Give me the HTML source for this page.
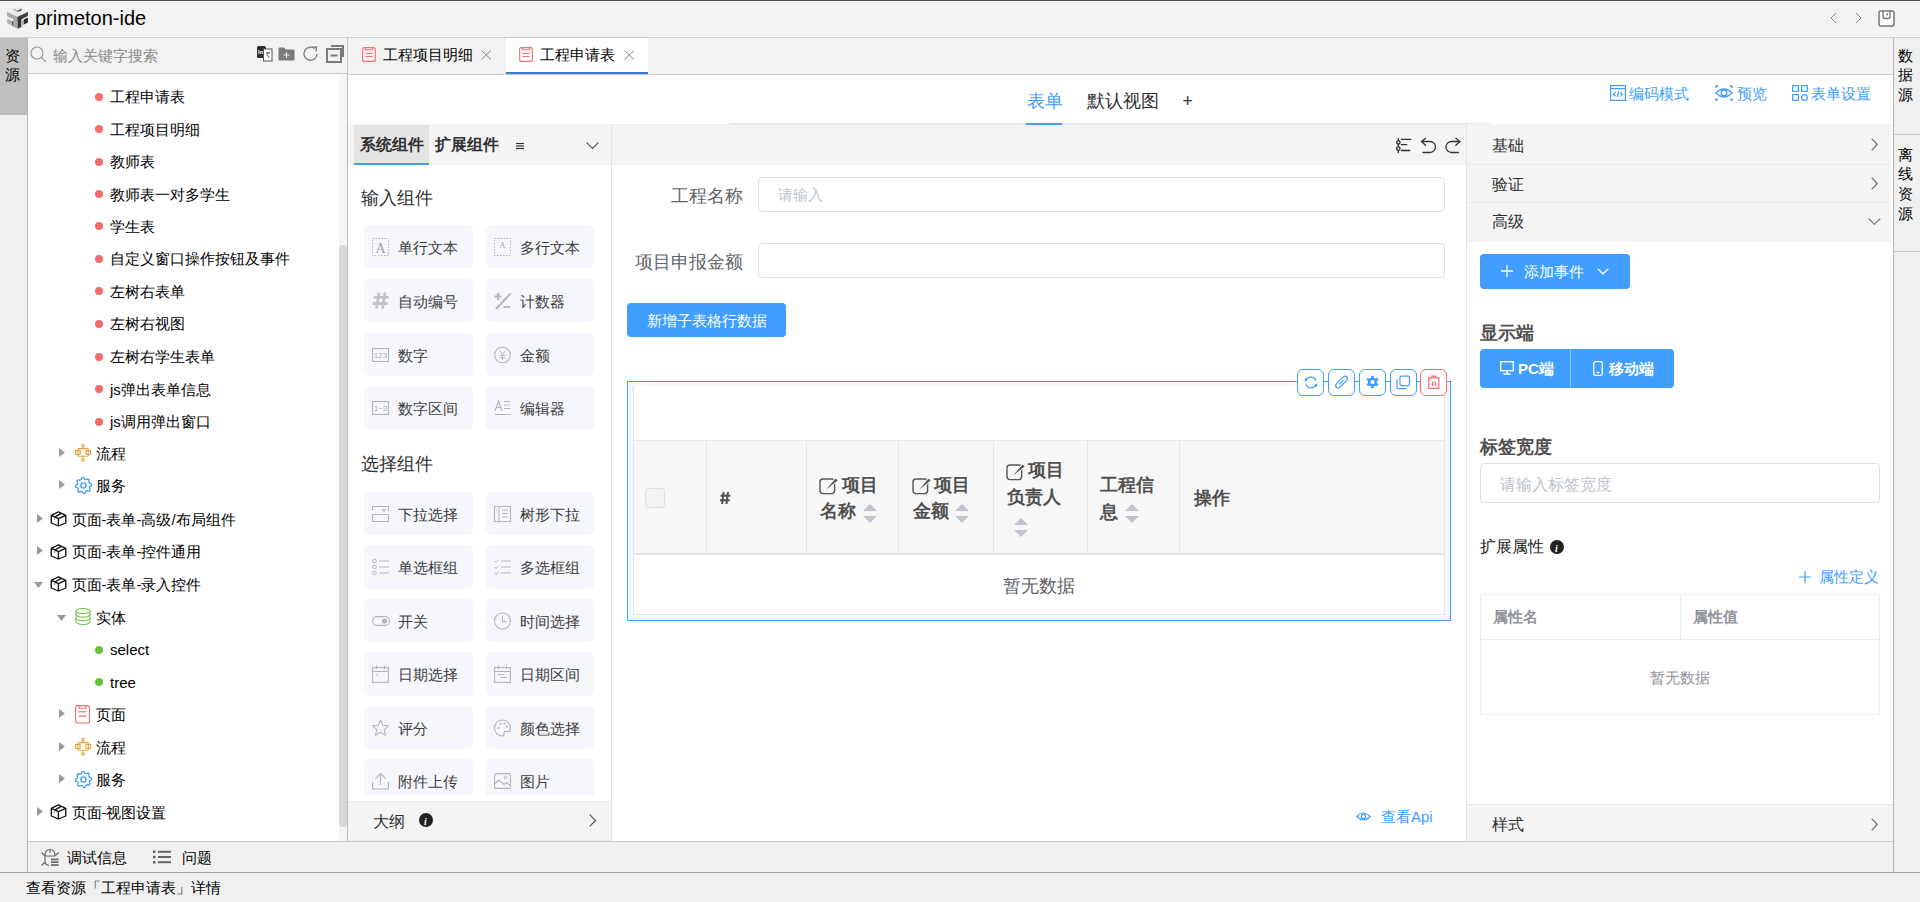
<!DOCTYPE html><html><head><meta charset="utf-8"><style>
html,body{margin:0;padding:0;width:1920px;height:902px;overflow:hidden;background:#f0f0f0;font-family:"Liberation Sans",sans-serif;}
body>div,body>svg{position:absolute;white-space:nowrap;box-sizing:border-box;}
svg{overflow:visible}
</style></head><body>
<div style="left:0px;top:0px;width:1920px;height:37px;background:#f2f2f2"></div>
<div style="left:0px;top:0px;width:1920px;height:1px;background:#4d4d4d"></div>
<div style="left:0px;top:37px;width:1920px;height:1px;background:#cfcfcf"></div>
<svg style="left:0px;top:0px;" width="32" height="32" viewBox="0 0 32 32">
<polygon points="7.1,12.1 17.7,6.8 27.9,11.8 17.7,17" fill="#ececec"/>
<polygon points="13.3,8.4 17.6,10.6 17.6,12.2 13.3,10" fill="#b0b0b0"/>
<polygon points="17.6,10.6 21.6,8.6 21.6,10.2 17.6,12.2" fill="#505050"/>
<polygon points="7.1,12.1 17.7,17 17.7,21.2 7.1,16.3" fill="#a9a9a9"/>
<polygon points="13.3,15 17.7,17 17.7,28.8 13.3,26.8" fill="#a9a9a9"/>
<polygon points="7.1,18.6 12,20.9 12,25.6 7.1,23.3" fill="#b4b4b4"/>
<polygon points="12,20.9 13.3,21.5 13.3,26.2 12,25.6" fill="#5a5a5a"/>
<polygon points="17.7,17 27.9,11.8 27.9,16 17.7,21.2" fill="#404040"/>
<polygon points="17.7,17 21.4,15.1 21.4,27 17.7,28.8" fill="#363636"/>
<polygon points="22.2,20.4 23.9,19.5 23.9,24.6 22.2,25.5" fill="#a8a8a8"/>
<polygon points="23.9,19.5 27.9,17.5 27.9,22.6 23.9,24.6" fill="#252525"/>
</svg>
<div style="left:35px;top:5.50px;font-size:20px;line-height:24px;color:#000;font-weight:400;">primeton-ide</div>
<svg style="left:1829px;top:12px;" width="10" height="12" viewBox="0 0 10 12"><polyline points="7,1 2,6 7,11" fill="none" stroke="#8a8a8a" stroke-width="1"/></svg>
<svg style="left:1854px;top:12px;" width="10" height="12" viewBox="0 0 10 12"><polyline points="2,1 7,6 2,11" fill="none" stroke="#8a8a8a" stroke-width="1"/></svg>
<svg style="left:1878px;top:10px;" width="17" height="17" viewBox="0 0 17 17"><rect x="1" y="1" width="15" height="15" rx="2" fill="#fff" stroke="#777" stroke-width="1.5"/><path d="M5,1 L5,6.5 Q5,8.5 7,8.5 L10,8.5 Q12,8.5 12,6.5 L12,1" fill="none" stroke="#777" stroke-width="1.4"/><line x1="9.2" y1="3" x2="9.2" y2="5.6" stroke="#555" stroke-width="1"/></svg>
<div style="left:0px;top:38px;width:27px;height:834px;background:#f0f0f0"></div>
<div style="left:0px;top:38px;width:27px;height:77px;background:#bfbfbf"></div>
<div style="left:4.5px;top:45.50px;font-size:15px;line-height:20px;color:#000;font-weight:400;">资</div>
<div style="left:4.5px;top:65.20px;font-size:15px;line-height:20px;color:#000;font-weight:400;">源</div>
<div style="left:27px;top:38px;width:1px;height:834px;background:#b4b4b4"></div>
<div style="left:1891px;top:75px;width:2px;height:766px;background:#f0f0f0"></div>
<div style="left:1893px;top:38px;width:27px;height:834px;background:#f0f0f0"></div>
<div style="left:1893px;top:38px;width:1px;height:834px;background:#b4b4b4"></div>
<div style="left:1898px;top:45.50px;font-size:15px;line-height:20px;color:#000;font-weight:400;">数</div>
<div style="left:1898px;top:65.40px;font-size:15px;line-height:20px;color:#000;font-weight:400;">据</div>
<div style="left:1898px;top:85.30px;font-size:15px;line-height:20px;color:#000;font-weight:400;">源</div>
<div style="left:1894px;top:134px;width:26px;height:1px;background:#c8c8c8"></div>
<div style="left:1898px;top:144.50px;font-size:15px;line-height:20px;color:#000;font-weight:400;">离</div>
<div style="left:1898px;top:164.20px;font-size:15px;line-height:20px;color:#000;font-weight:400;">线</div>
<div style="left:1898px;top:183.90px;font-size:15px;line-height:20px;color:#000;font-weight:400;">资</div>
<div style="left:1898px;top:203.60px;font-size:15px;line-height:20px;color:#000;font-weight:400;">源</div>
<div style="left:1894px;top:251px;width:26px;height:1px;background:#c8c8c8"></div>
<div style="left:28px;top:38px;width:319px;height:35px;background:#f2f2f2"></div>
<div style="left:28px;top:73px;width:319px;height:1px;background:#cdcdcd"></div>
<div style="left:347px;top:38px;width:1px;height:804px;background:#bdbdbd"></div>
<svg style="left:30px;top:46px;" width="17" height="17" viewBox="0 0 17 17"><circle cx="7" cy="7" r="6" fill="none" stroke="#999" stroke-width="1.1"/><line x1="11.3" y1="11.3" x2="16" y2="16" stroke="#999" stroke-width="1.2"/></svg>
<div style="left:52.5px;top:45.50px;font-size:15px;line-height:20px;color:#888;font-weight:400;">输入关键字搜索</div>
<svg style="left:257px;top:46px;" width="16" height="16" viewBox="0 0 16 16"><rect x="0" y="0" width="9" height="12" rx="1.5" fill="#2e2e2e"/><text x="1" y="8" font-size="6" font-weight="700" fill="#fff" font-family="Liberation Sans">In</text><rect x="6.5" y="3" width="8.5" height="12" fill="#fff" stroke="#555" stroke-width="1"/><path d="M9,7 L13,7 M11,6 L11,8 M9.5,8 L12.5,12" stroke="#444" stroke-width="0.9" fill="none"/></svg>
<svg style="left:278px;top:47px;" width="17" height="14" viewBox="0 0 17 14"><path d="M0.5,1.5 Q0.5,0.5 1.5,0.5 L6,0.5 L8,2.5 L15.5,2.5 Q16.5,2.5 16.5,3.5 L16.5,12.5 Q16.5,13.5 15.5,13.5 L1.5,13.5 Q0.5,13.5 0.5,12.5 Z" fill="#7b7b7b"/><path d="M8.5,5 L8.5,11 M5.5,8 L11.5,8" stroke="#f0f0f0" stroke-width="1"/></svg>
<svg style="left:303px;top:46px;" width="16" height="16" viewBox="0 0 16 16"><path d="M14,8 A6.5,6.5 0 1 1 11.5,2.6" fill="none" stroke="#7a7a7a" stroke-width="1.3"/><polyline points="8.5,1.2 13.5,1 13,5.5" fill="none" stroke="#7a7a7a" stroke-width="1.3"/></svg>
<svg style="left:326px;top:45px;" width="18" height="18" viewBox="0 0 18 18"><rect x="1" y="4" width="14" height="13" fill="none" stroke="#7a7a7a" stroke-width="2"/><polyline points="5,1 17,1 17,12" fill="none" stroke="#7a7a7a" stroke-width="2"/><line x1="4.5" y1="10.5" x2="11.5" y2="10.5" stroke="#7a7a7a" stroke-width="2"/></svg>
<div style="left:28px;top:74px;width:311px;height:767px;background:#fff"></div>
<div style="left:339px;top:74px;width:8px;height:767px;background:#f4f4f4"></div>
<div style="left:339px;top:245px;width:7.6px;height:582px;background:#d6d6d6;border-radius:4px"></div>
<div style="left:95px;top:92.6px;width:8px;height:8px;background:#f56c6c;border-radius:50%"></div>
<div style="left:110px;top:87.10px;font-size:15px;line-height:20px;color:#000;font-weight:400;">工程申请表</div>
<div style="left:95px;top:125.19999999999999px;width:8px;height:8px;background:#f56c6c;border-radius:50%"></div>
<div style="left:110px;top:119.70px;font-size:15px;line-height:20px;color:#000;font-weight:400;">工程项目明细</div>
<div style="left:95px;top:157.5px;width:8px;height:8px;background:#f56c6c;border-radius:50%"></div>
<div style="left:110px;top:152.00px;font-size:15px;line-height:20px;color:#000;font-weight:400;">教师表</div>
<div style="left:95px;top:190px;width:8px;height:8px;background:#f56c6c;border-radius:50%"></div>
<div style="left:110px;top:184.50px;font-size:15px;line-height:20px;color:#000;font-weight:400;">教师表一对多学生</div>
<div style="left:95px;top:222.3px;width:8px;height:8px;background:#f56c6c;border-radius:50%"></div>
<div style="left:110px;top:216.80px;font-size:15px;line-height:20px;color:#000;font-weight:400;">学生表</div>
<div style="left:95px;top:254.60000000000002px;width:8px;height:8px;background:#f56c6c;border-radius:50%"></div>
<div style="left:110px;top:249.10px;font-size:15px;line-height:20px;color:#000;font-weight:400;">自定义窗口操作按钮及事件</div>
<div style="left:95px;top:287.2px;width:8px;height:8px;background:#f56c6c;border-radius:50%"></div>
<div style="left:110px;top:281.70px;font-size:15px;line-height:20px;color:#000;font-weight:400;">左树右表单</div>
<div style="left:95px;top:319.5px;width:8px;height:8px;background:#f56c6c;border-radius:50%"></div>
<div style="left:110px;top:314.00px;font-size:15px;line-height:20px;color:#000;font-weight:400;">左树右视图</div>
<div style="left:95px;top:352.5px;width:8px;height:8px;background:#f56c6c;border-radius:50%"></div>
<div style="left:110px;top:347.00px;font-size:15px;line-height:20px;color:#000;font-weight:400;">左树右学生表单</div>
<div style="left:95px;top:385px;width:8px;height:8px;background:#f56c6c;border-radius:50%"></div>
<div style="left:110px;top:379.50px;font-size:15px;line-height:20px;color:#000;font-weight:400;">js弹出表单信息</div>
<div style="left:95px;top:417.5px;width:8px;height:8px;background:#f56c6c;border-radius:50%"></div>
<div style="left:110px;top:412.00px;font-size:15px;line-height:20px;color:#000;font-weight:400;">js调用弹出窗口</div>
<svg style="left:59px;top:447.9px;" width="7" height="9" viewBox="0 0 7 9"><polygon points="0,0 6,4.5 0,9" fill="#999"/></svg>
<svg style="left:74.5px;top:444.4px;" width="16" height="18" viewBox="0 0 16 18"><g fill="none" stroke="#e6a23c" stroke-width="1.1"><circle cx="8" cy="1.6" r="1.3"/><line x1="8" y1="2.9" x2="8" y2="4.6"/><rect x="3" y="4.6" width="10.3" height="7.6" rx="0.8"/><rect x="0.6" y="6.5" width="4.6" height="3.9"/><rect x="11" y="6.5" width="4.6" height="3.9"/><line x1="8" y1="12.2" x2="8" y2="14.4"/><circle cx="8" cy="15.8" r="1.3"/></g></svg>
<div style="left:96px;top:443.90px;font-size:15px;line-height:20px;color:#000;font-weight:400;">流程</div>
<svg style="left:59px;top:480.1px;" width="7" height="9" viewBox="0 0 7 9"><polygon points="0,0 6,4.5 0,9" fill="#999"/></svg>
<svg style="left:74.5px;top:477.1px;" width="17" height="17" viewBox="0 0 17 17"><polygon points="6.94,0.65 8.50,0.50 9.73,2.32 10.91,2.68 12.94,1.85 14.16,2.84 13.74,5.00 14.32,6.09 16.35,6.94 16.50,8.50 14.68,9.73 14.32,10.91 15.15,12.94 14.16,14.16 12.00,13.74 10.91,14.32 10.06,16.35 8.50,16.50 7.27,14.68 6.09,14.32 4.06,15.15 2.84,14.16 3.26,12.00 2.68,10.91 0.65,10.06 0.50,8.50 2.32,7.27 2.68,6.09 1.85,4.06 2.84,2.84 5.00,3.26 6.09,2.68" fill="none" stroke="#409eff" stroke-width="1.3" stroke-linejoin="round"/><circle cx="8.5" cy="8.5" r="2.6" fill="none" stroke="#409eff" stroke-width="1.4"/></svg>
<div style="left:96px;top:476.10px;font-size:15px;line-height:20px;color:#000;font-weight:400;">服务</div>
<svg style="left:37px;top:513.8px;" width="7" height="9" viewBox="0 0 7 9"><polygon points="0,0 6,4.5 0,9" fill="#999"/></svg>
<svg style="left:50.0px;top:511.29999999999995px;" width="17" height="16" viewBox="0 0 17 16"><path d="M8.4,0.9 L15.75,4.3 L15.75,12 L8.4,15 L1.3,12 L1.3,4.3 Z M1.3,4.3 L8.4,7.7 L15.75,4.3 M8.4,7.7 L8.4,15 M4.6,6.1 L10.8,2.6" fill="none" stroke="#111" stroke-width="1.35" stroke-linejoin="round"/><path d="M4.6,6.4 L4.6,9" stroke="#888" stroke-width="1"/></svg>
<div style="left:71.5px;top:509.80px;font-size:15px;line-height:20px;color:#000;font-weight:400;">页面-表单-高级/布局组件</div>
<svg style="left:37px;top:546.3px;" width="7" height="9" viewBox="0 0 7 9"><polygon points="0,0 6,4.5 0,9" fill="#999"/></svg>
<svg style="left:50.0px;top:543.8px;" width="17" height="16" viewBox="0 0 17 16"><path d="M8.4,0.9 L15.75,4.3 L15.75,12 L8.4,15 L1.3,12 L1.3,4.3 Z M1.3,4.3 L8.4,7.7 L15.75,4.3 M8.4,7.7 L8.4,15 M4.6,6.1 L10.8,2.6" fill="none" stroke="#111" stroke-width="1.35" stroke-linejoin="round"/><path d="M4.6,6.4 L4.6,9" stroke="#888" stroke-width="1"/></svg>
<div style="left:71.5px;top:542.30px;font-size:15px;line-height:20px;color:#000;font-weight:400;">页面-表单-控件通用</div>
<svg style="left:34.3px;top:581.8px;" width="10" height="6" viewBox="0 0 10 6"><polygon points="0,0 9,0 4.5,6" fill="#999"/></svg>
<svg style="left:50.0px;top:576.4px;" width="17" height="16" viewBox="0 0 17 16"><path d="M8.4,0.9 L15.75,4.3 L15.75,12 L8.4,15 L1.3,12 L1.3,4.3 Z M1.3,4.3 L8.4,7.7 L15.75,4.3 M8.4,7.7 L8.4,15 M4.6,6.1 L10.8,2.6" fill="none" stroke="#111" stroke-width="1.35" stroke-linejoin="round"/><path d="M4.6,6.4 L4.6,9" stroke="#888" stroke-width="1"/></svg>
<div style="left:71.5px;top:574.90px;font-size:15px;line-height:20px;color:#000;font-weight:400;">页面-表单-录入控件</div>
<svg style="left:57.3px;top:614.6px;" width="10" height="6" viewBox="0 0 10 6"><polygon points="0,0 9,0 4.5,6" fill="#999"/></svg>
<svg style="left:74.5px;top:607.7px;" width="16" height="17" viewBox="0 0 16 17"><g fill="none" stroke="#67c23a" stroke-width="1"><ellipse cx="8" cy="3" rx="7" ry="2.5"/><path d="M1,3 L1,14 A7,2.5 0 0 0 15,14 L15,3"/><path d="M1,6.7 A7,2.5 0 0 0 15,6.7"/><path d="M1,10.3 A7,2.5 0 0 0 15,10.3"/></g></svg>
<div style="left:96px;top:607.70px;font-size:15px;line-height:20px;color:#000;font-weight:400;">实体</div>
<div style="left:95px;top:645.8px;width:8px;height:8px;background:#67c23a;border-radius:50%"></div>
<div style="left:110px;top:640.30px;font-size:15px;line-height:20px;color:#000;font-weight:400;">select</div>
<div style="left:95px;top:678.3px;width:8px;height:8px;background:#67c23a;border-radius:50%"></div>
<div style="left:110px;top:672.80px;font-size:15px;line-height:20px;color:#000;font-weight:400;">tree</div>
<svg style="left:59px;top:708.9px;" width="7" height="9" viewBox="0 0 7 9"><polygon points="0,0 6,4.5 0,9" fill="#999"/></svg>
<svg style="left:75.0px;top:704.9px;" width="15" height="19" viewBox="0 0 15 19"><g fill="none" stroke="#f56c6c" stroke-width="1.1"><rect x="0.6" y="0.6" width="13.8" height="17.4" rx="2"/><path d="M4,0.6 L4,3.3 L11,3.3 L11,0.6"/><line x1="3.5" y1="6.8" x2="11.5" y2="6.8"/><line x1="3.5" y1="11.1" x2="11.5" y2="11.1"/></g></svg>
<div style="left:96px;top:704.90px;font-size:15px;line-height:20px;color:#000;font-weight:400;">页面</div>
<svg style="left:59px;top:741.5px;" width="7" height="9" viewBox="0 0 7 9"><polygon points="0,0 6,4.5 0,9" fill="#999"/></svg>
<svg style="left:74.5px;top:738px;" width="16" height="18" viewBox="0 0 16 18"><g fill="none" stroke="#e6a23c" stroke-width="1.1"><circle cx="8" cy="1.6" r="1.3"/><line x1="8" y1="2.9" x2="8" y2="4.6"/><rect x="3" y="4.6" width="10.3" height="7.6" rx="0.8"/><rect x="0.6" y="6.5" width="4.6" height="3.9"/><rect x="11" y="6.5" width="4.6" height="3.9"/><line x1="8" y1="12.2" x2="8" y2="14.4"/><circle cx="8" cy="15.8" r="1.3"/></g></svg>
<div style="left:96px;top:737.50px;font-size:15px;line-height:20px;color:#000;font-weight:400;">流程</div>
<svg style="left:59px;top:773.8px;" width="7" height="9" viewBox="0 0 7 9"><polygon points="0,0 6,4.5 0,9" fill="#999"/></svg>
<svg style="left:74.5px;top:770.8px;" width="17" height="17" viewBox="0 0 17 17"><polygon points="6.94,0.65 8.50,0.50 9.73,2.32 10.91,2.68 12.94,1.85 14.16,2.84 13.74,5.00 14.32,6.09 16.35,6.94 16.50,8.50 14.68,9.73 14.32,10.91 15.15,12.94 14.16,14.16 12.00,13.74 10.91,14.32 10.06,16.35 8.50,16.50 7.27,14.68 6.09,14.32 4.06,15.15 2.84,14.16 3.26,12.00 2.68,10.91 0.65,10.06 0.50,8.50 2.32,7.27 2.68,6.09 1.85,4.06 2.84,2.84 5.00,3.26 6.09,2.68" fill="none" stroke="#409eff" stroke-width="1.3" stroke-linejoin="round"/><circle cx="8.5" cy="8.5" r="2.6" fill="none" stroke="#409eff" stroke-width="1.4"/></svg>
<div style="left:96px;top:769.80px;font-size:15px;line-height:20px;color:#000;font-weight:400;">服务</div>
<svg style="left:37px;top:806.5px;" width="7" height="9" viewBox="0 0 7 9"><polygon points="0,0 6,4.5 0,9" fill="#999"/></svg>
<svg style="left:50.0px;top:804px;" width="17" height="16" viewBox="0 0 17 16"><path d="M8.4,0.9 L15.75,4.3 L15.75,12 L8.4,15 L1.3,12 L1.3,4.3 Z M1.3,4.3 L8.4,7.7 L15.75,4.3 M8.4,7.7 L8.4,15 M4.6,6.1 L10.8,2.6" fill="none" stroke="#111" stroke-width="1.35" stroke-linejoin="round"/><path d="M4.6,6.4 L4.6,9" stroke="#888" stroke-width="1"/></svg>
<div style="left:71.5px;top:802.50px;font-size:15px;line-height:20px;color:#000;font-weight:400;">页面-视图设置</div>
<div style="left:28px;top:841px;width:1865px;height:31px;background:#f0f0f0"></div>
<div style="left:28px;top:841px;width:1865px;height:1px;background:#c8c8c8"></div>
<div style="left:0px;top:872px;width:1920px;height:1px;background:#a0a0a0"></div>
<div style="left:0px;top:873px;width:1920px;height:29px;background:#f0f0f0"></div>
<svg style="left:41px;top:848px;" width="19" height="19" viewBox="0 0 19 19"><g fill="none" stroke="#6a6a6a" stroke-width="1.2"><path d="M4,8 Q4,1.5 9,1.5 Q14,1.5 14,8"/><path d="M9,1.5 L9,5"/><path d="M0.6,4.5 L4,8 M0.6,17.5 L4,14 M4,8 L4,14 Q4.5,17 8,17.5 M14,8 L17.5,4.5 M4,8 L14,8"/></g><g fill="#6a6a6a"><rect x="10" y="10.6" width="7.6" height="1.7"/><rect x="10" y="13.3" width="7.6" height="1.7"/><rect x="10" y="16.2" width="7.6" height="1.7"/></g></svg>
<div style="left:67px;top:848.00px;font-size:15px;line-height:20px;color:#000;font-weight:400;">调试信息</div>
<svg style="left:153px;top:850px;" width="18" height="14" viewBox="0 0 18 14"><g fill="#666"><rect x="0" y="0.5" width="2.5" height="2.5"/><rect x="0" y="5.8" width="2.5" height="2.5"/><rect x="0" y="11" width="2.5" height="2.5"/><rect x="5" y="0.8" width="13" height="2"/><rect x="5" y="6" width="13" height="2"/><rect x="5" y="11.2" width="13" height="2"/></g></svg>
<div style="left:182px;top:848.00px;font-size:15px;line-height:20px;color:#000;font-weight:400;">问题</div>
<div style="left:25.5px;top:878.00px;font-size:15px;line-height:20px;color:#000;font-weight:400;">查看资源「工程申请表」详情</div>
<div style="left:348px;top:38px;width:1545px;height:36px;background:#f2f2f2"></div>
<div style="left:348px;top:74px;width:1545px;height:1px;background:#cfcfcf"></div>
<div style="left:506px;top:38px;width:142px;height:36px;background:#fff"></div>
<div style="left:506px;top:72px;width:142px;height:2px;background:#3b7dd0"></div>
<svg style="left:361.5px;top:47px;" width="14" height="15" viewBox="0 0 14 15"><g fill="none" stroke="#f27474" stroke-width="1.1"><rect x="0.6" y="0.6" width="12.8" height="13.8" rx="2"/><path d="M3.5,0.6 L3.5,2.8 L10.5,2.8 L10.5,0.6"/><line x1="3.5" y1="6.5" x2="10.5" y2="6.5"/><line x1="3.5" y1="9.5" x2="10.5" y2="9.5"/></g></svg>
<div style="left:382.5px;top:45.00px;font-size:15px;line-height:20px;color:#000;font-weight:400;">工程项目明细</div>
<svg style="left:481px;top:49.5px;" width="11" height="10" viewBox="0 0 11 10"><path d="M0.5,0.5 L10,9.5 M10,0.5 L0.5,9.5" stroke="#808080" stroke-width="0.95"/></svg>
<svg style="left:518.5px;top:47px;" width="14" height="15" viewBox="0 0 14 15"><g fill="none" stroke="#f27474" stroke-width="1.1"><rect x="0.6" y="0.6" width="12.8" height="13.8" rx="2"/><path d="M3.5,0.6 L3.5,2.8 L10.5,2.8 L10.5,0.6"/><line x1="3.5" y1="6.5" x2="10.5" y2="6.5"/><line x1="3.5" y1="9.5" x2="10.5" y2="9.5"/></g></svg>
<div style="left:540px;top:45.00px;font-size:15px;line-height:20px;color:#000;font-weight:400;">工程申请表</div>
<svg style="left:623.5px;top:49.5px;" width="11" height="10" viewBox="0 0 11 10"><path d="M0.5,0.5 L10,9.5 M10,0.5 L0.5,9.5" stroke="#808080" stroke-width="0.95"/></svg>
<div style="left:348px;top:75px;width:1545px;height:766px;background:#fff"></div>
<div style="left:348px;top:124px;width:1545px;height:1px;background:#f3eded"></div>
<div style="left:729px;top:123px;width:762px;height:2px;background:#e4e7ed"></div>
<div style="left:1026.5px;top:88.50px;font-size:17.5px;line-height:24px;color:#409eff;font-weight:400;">表单</div>
<div style="left:1026px;top:123px;width:36px;height:2px;background:#409eff"></div>
<div style="left:1086.5px;top:88.50px;font-size:17.5px;line-height:24px;color:#303133;font-weight:400;">默认视图</div>
<div style="left:1182.5px;top:88.50px;font-size:17.5px;line-height:24px;color:#303133;font-weight:400;">+</div>
<svg style="left:1609.5px;top:85px;" width="16" height="16" viewBox="0 0 16 16"><g fill="none" stroke="#409eff" stroke-width="1.2"><rect x="0.6" y="0.6" width="14.8" height="14.8"/><line x1="0.6" y1="3.6" x2="15.4" y2="3.6"/><path d="M5.5,7 L3.5,9.2 L5.5,11.4 M10.5,7 L12.5,9.2 L10.5,11.4 M8.8,6.5 L7.2,12"/></g></svg>
<div style="left:1629px;top:84.00px;font-size:15px;line-height:20px;color:#409eff;font-weight:400;">编码模式</div>
<svg style="left:1714.5px;top:85px;" width="18" height="16" viewBox="0 0 18 16"><g fill="none" stroke="#409eff" stroke-width="1.3"><path d="M1,8 Q9,0 17,8 Q9,16 1,8 Z"/><circle cx="9" cy="8" r="2.8"/><path d="M1,3 L1,1 L3,1 M15,1 L17,1 L17,3 M17,13 L17,15 L15,15 M3,15 L1,15 L1,13"/></g></svg>
<div style="left:1736.5px;top:84.00px;font-size:15px;line-height:20px;color:#409eff;font-weight:400;">预览</div>
<svg style="left:1791.5px;top:85px;" width="16" height="16" viewBox="0 0 16 16"><g fill="none" stroke="#409eff" stroke-width="1.2"><rect x="0.6" y="0.6" width="5.8" height="5.8"/><rect x="9.6" y="0.6" width="5.8" height="5.8"/><rect x="0.6" y="9.6" width="5.8" height="5.8"/><circle cx="12.5" cy="12.5" r="2.9"/></g></svg>
<div style="left:1811px;top:84.00px;font-size:15px;line-height:20px;color:#409eff;font-weight:400;">表单设置</div>
<div style="left:348px;top:124px;width:263px;height:41px;background:#f4f4f4"></div>
<div style="left:354px;top:125px;width:75px;height:38px;background:#e4e4e4"></div>
<div style="left:354px;top:163px;width:75px;height:2px;background:#409eff"></div>
<div style="left:360px;top:134.00px;font-size:16px;line-height:22px;color:#303133;font-weight:700;">系统组件</div>
<div style="left:434.5px;top:134.00px;font-size:16px;line-height:22px;color:#303133;font-weight:700;">扩展组件</div>
<svg style="left:515.5px;top:142px;" width="8" height="8" viewBox="0 0 8 8"><g stroke="#303133" stroke-width="1.2"><line x1="0" y1="1.5" x2="8" y2="1.5"/><line x1="0" y1="4" x2="8" y2="4"/><line x1="0" y1="6.5" x2="8" y2="6.5"/></g></svg>
<svg style="left:586px;top:141.5px;" width="13" height="8" viewBox="0 0 13 8"><polyline points="0.7,0.7 6.5,6.5 12.3,0.7" fill="none" stroke="#555" stroke-width="1.2"/></svg>
<div style="left:611px;top:124px;width:1px;height:717px;background:#e4e4e4"></div>
<div style="left:360.5px;top:186.00px;font-size:17.5px;line-height:24px;color:#303133;font-weight:400;">输入组件</div>
<div style="left:360.5px;top:451.50px;font-size:17.5px;line-height:24px;color:#303133;font-weight:400;">选择组件</div>
<div style="left:364px;top:225.0px;width:109px;height:43.3px;background:#f6f7fc;border-radius:5px"></div>
<svg style="left:372px;top:238.0px;" width="18" height="18" viewBox="0 0 18 18"><g fill="none" stroke="#b4b4b8" stroke-width="1" stroke-dasharray="1.5,1.5"><rect x="0.5" y="0.5" width="16" height="17"/></g><text x="8.5" y="14.5" text-anchor="middle" font-size="14" fill="#a0a0a4" font-family="Liberation Serif">A</text></svg>
<div style="left:398px;top:238.00px;font-size:15px;line-height:20px;color:#3d3d3d;font-weight:400;">单行文本</div>
<div style="left:486px;top:225.0px;width:108px;height:43.3px;background:#f6f7fc;border-radius:5px"></div>
<svg style="left:494px;top:238.0px;" width="18" height="18" viewBox="0 0 18 18"><g fill="none" stroke="#b4b4b8" stroke-width="1" stroke-dasharray="1.5,1.5"><rect x="0.5" y="0.5" width="16" height="17"/></g><text x="5.5" y="9.5" font-size="8" fill="#a0a0a4" font-family="Liberation Serif">A</text></svg>
<div style="left:520px;top:238.00px;font-size:15px;line-height:20px;color:#3d3d3d;font-weight:400;">多行文本</div>
<div style="left:364px;top:278.8px;width:109px;height:43.3px;background:#f6f7fc;border-radius:5px"></div>
<svg style="left:372px;top:291.8px;" width="18" height="18" viewBox="0 0 18 18"><path d="M7,0.5 L4.5,16.5 M13,0.5 L10.5,16.5 M1.5,5.3 L16.5,5.3 M0.5,11.5 L15.5,11.5" stroke="#c4c4c8" stroke-width="2.8" fill="none"/></svg>
<div style="left:398px;top:291.80px;font-size:15px;line-height:20px;color:#3d3d3d;font-weight:400;">自动编号</div>
<div style="left:486px;top:278.8px;width:108px;height:43.3px;background:#f6f7fc;border-radius:5px"></div>
<svg style="left:494px;top:291.8px;" width="18" height="18" viewBox="0 0 18 18"><path d="M0.5,4.5 L7.5,4.5 M4,1 L4,8 M16.5,1.5 L2,17 M9.5,15 L16.5,15" stroke="#b8b8bc" stroke-width="2.2" fill="none"/></svg>
<div style="left:520px;top:291.80px;font-size:15px;line-height:20px;color:#3d3d3d;font-weight:400;">计数器</div>
<div style="left:364px;top:332.6px;width:109px;height:43.3px;background:#f6f7fc;border-radius:5px"></div>
<svg style="left:372px;top:345.6px;" width="18" height="18" viewBox="0 0 18 18"><rect x="0.5" y="2.5" width="16" height="13" fill="none" stroke="#b4b4b8" stroke-width="1.1"/><text x="8.5" y="12" text-anchor="middle" font-size="8" fill="#a8a8ac" font-family="Liberation Sans">123</text></svg>
<div style="left:398px;top:345.60px;font-size:15px;line-height:20px;color:#3d3d3d;font-weight:400;">数字</div>
<div style="left:486px;top:332.6px;width:108px;height:43.3px;background:#f6f7fc;border-radius:5px"></div>
<svg style="left:494px;top:345.6px;" width="18" height="18" viewBox="0 0 18 18"><circle cx="8.5" cy="9" r="7.8" fill="none" stroke="#b4b4b8" stroke-width="1.1"/><path d="M5.5,4.5 L8.5,8.5 L11.5,4.5 M8.5,8.5 L8.5,14 M5.8,9.5 L11.2,9.5 M5.8,11.8 L11.2,11.8" stroke="#b4b4b8" stroke-width="1" fill="none"/></svg>
<div style="left:520px;top:345.60px;font-size:15px;line-height:20px;color:#3d3d3d;font-weight:400;">金额</div>
<div style="left:364px;top:386.4px;width:109px;height:43.3px;background:#f6f7fc;border-radius:5px"></div>
<svg style="left:372px;top:399.4px;" width="18" height="18" viewBox="0 0 18 18"><rect x="0.5" y="2.5" width="16" height="13" fill="none" stroke="#b4b4b8" stroke-width="1.1"/><text x="8.5" y="12" text-anchor="middle" font-size="8" fill="#a8a8ac" font-family="Liberation Sans">1~3</text></svg>
<div style="left:398px;top:399.40px;font-size:15px;line-height:20px;color:#3d3d3d;font-weight:400;">数字区间</div>
<div style="left:486px;top:386.4px;width:108px;height:43.3px;background:#f6f7fc;border-radius:5px"></div>
<svg style="left:494px;top:399.4px;" width="18" height="18" viewBox="0 0 18 18"><path d="M1,12 L4.5,2 L8,12 M2.2,8.5 L6.8,8.5 M10,2.5 L16.5,2.5 M10,6 L16.5,6 M10,9.5 L16.5,9.5 M1,15.5 L16.5,15.5" stroke="#b4b4b8" stroke-width="1.1" fill="none"/></svg>
<div style="left:520px;top:399.40px;font-size:15px;line-height:20px;color:#3d3d3d;font-weight:400;">编辑器</div>
<div style="left:364px;top:491.8px;width:109px;height:43.3px;background:#f6f7fc;border-radius:5px"></div>
<svg style="left:372px;top:504.8px;" width="18" height="18" viewBox="0 0 18 18"><path d="M0.5,6 L0.5,1.5 L16.5,1.5 L16.5,6 M0.5,9.5 L0.5,16.5 L16.5,16.5 L16.5,9.5 M0.5,9.5 L16.5,9.5 M10,4 L12,6 L14,4" stroke="#b4b4b8" stroke-width="1.1" fill="none"/></svg>
<div style="left:398px;top:504.80px;font-size:15px;line-height:20px;color:#3d3d3d;font-weight:400;">下拉选择</div>
<div style="left:486px;top:491.8px;width:108px;height:43.3px;background:#f6f7fc;border-radius:5px"></div>
<svg style="left:494px;top:504.8px;" width="18" height="18" viewBox="0 0 18 18"><rect x="0.5" y="1.5" width="16" height="15" fill="none" stroke="#b4b4b8" stroke-width="1.1"/><path d="M5,1.5 L5,16.5 M8,5 L14,5 M8,8.5 L14,8.5 M8,12 L14,12 M2.5,4.5 L2.5,5.5" stroke="#b4b4b8" stroke-width="1.1" fill="none"/></svg>
<div style="left:520px;top:504.80px;font-size:15px;line-height:20px;color:#3d3d3d;font-weight:400;">树形下拉</div>
<div style="left:364px;top:545.3px;width:109px;height:43.3px;background:#f6f7fc;border-radius:5px"></div>
<svg style="left:372px;top:558.3px;" width="18" height="18" viewBox="0 0 18 18"><g fill="none" stroke="#b4b4b8" stroke-width="1"><circle cx="2.5" cy="3" r="1.8"/><circle cx="2.5" cy="9" r="1.8"/><circle cx="2.5" cy="15" r="1.8"/><path d="M7,3 L17,3 M7,9 L17,9 M7,15 L17,15" stroke-width="1.2"/></g></svg>
<div style="left:398px;top:558.30px;font-size:15px;line-height:20px;color:#3d3d3d;font-weight:400;">单选框组</div>
<div style="left:486px;top:545.3px;width:108px;height:43.3px;background:#f6f7fc;border-radius:5px"></div>
<svg style="left:494px;top:558.3px;" width="18" height="18" viewBox="0 0 18 18"><g fill="none" stroke="#b4b4b8" stroke-width="1"><path d="M0.5,3 L2,4.5 L4.5,1.5 M0.5,9 L2,10.5 L4.5,7.5 M0.5,15 L2,16.5 L4.5,13.5"/><path d="M7,3 L17,3 M7,9 L17,9 M7,15 L17,15" stroke-width="1.2"/></g></svg>
<div style="left:520px;top:558.30px;font-size:15px;line-height:20px;color:#3d3d3d;font-weight:400;">多选框组</div>
<div style="left:364px;top:598.8px;width:109px;height:43.3px;background:#f6f7fc;border-radius:5px"></div>
<svg style="left:372px;top:611.8px;" width="18" height="18" viewBox="0 0 18 18"><rect x="0.6" y="4.6" width="16.8" height="8.8" rx="4.4" fill="none" stroke="#b4b4b8" stroke-width="1.1"/><circle cx="12.5" cy="9" r="2.6" fill="#b4b4b8"/></svg>
<div style="left:398px;top:611.80px;font-size:15px;line-height:20px;color:#3d3d3d;font-weight:400;">开关</div>
<div style="left:486px;top:598.8px;width:108px;height:43.3px;background:#f6f7fc;border-radius:5px"></div>
<svg style="left:494px;top:611.8px;" width="18" height="18" viewBox="0 0 18 18"><circle cx="8.5" cy="9" r="8" fill="none" stroke="#b4b4b8" stroke-width="1.1"/><path d="M8.5,3.5 L8.5,9.5 L12.5,9.5" stroke="#b4b4b8" stroke-width="1.1" fill="none"/></svg>
<div style="left:520px;top:611.80px;font-size:15px;line-height:20px;color:#3d3d3d;font-weight:400;">时间选择</div>
<div style="left:364px;top:652.3px;width:109px;height:43.3px;background:#f6f7fc;border-radius:5px"></div>
<svg style="left:372px;top:665.3px;" width="18" height="18" viewBox="0 0 18 18"><rect x="0.6" y="2.6" width="15.8" height="14.8" fill="none" stroke="#b4b4b8" stroke-width="1.1"/><path d="M0.6,6.5 L16.4,6.5 M4.5,0.5 L4.5,4 M12.5,0.5 L12.5,4 M4,10 L6,10" stroke="#b4b4b8" stroke-width="1.1" fill="none"/></svg>
<div style="left:398px;top:665.30px;font-size:15px;line-height:20px;color:#3d3d3d;font-weight:400;">日期选择</div>
<div style="left:486px;top:652.3px;width:108px;height:43.3px;background:#f6f7fc;border-radius:5px"></div>
<svg style="left:494px;top:665.3px;" width="18" height="18" viewBox="0 0 18 18"><rect x="0.6" y="2.6" width="15.8" height="14.8" fill="none" stroke="#b4b4b8" stroke-width="1.1"/><path d="M0.6,6.5 L16.4,6.5 M4.5,0.5 L4.5,4 M12.5,0.5 L12.5,4 M4,9.5 L10,9.5 M6,12.5 L13,12.5" stroke="#b4b4b8" stroke-width="1.1" fill="none"/></svg>
<div style="left:520px;top:665.30px;font-size:15px;line-height:20px;color:#3d3d3d;font-weight:400;">日期区间</div>
<div style="left:364px;top:705.8px;width:109px;height:43.3px;background:#f6f7fc;border-radius:5px"></div>
<svg style="left:372px;top:718.8px;" width="18" height="18" viewBox="0 0 18 18"><polygon points="8.5,1 10.8,6.3 16.5,6.8 12.2,10.6 13.5,16.2 8.5,13.2 3.5,16.2 4.8,10.6 0.5,6.8 6.2,6.3" fill="none" stroke="#b4b4b8" stroke-width="1.1" stroke-linejoin="round"/></svg>
<div style="left:398px;top:718.80px;font-size:15px;line-height:20px;color:#3d3d3d;font-weight:400;">评分</div>
<div style="left:486px;top:705.8px;width:108px;height:43.3px;background:#f6f7fc;border-radius:5px"></div>
<svg style="left:494px;top:718.8px;" width="18" height="18" viewBox="0 0 18 18"><path d="M8.5,1 A8,8 0 1 0 8.5,17 Q10,17 10,15.5 Q9.5,13 11,12.5 L13.5,12.5 Q16.5,12.5 16.5,9 A8,8 0 0 0 8.5,1 Z" fill="none" stroke="#b4b4b8" stroke-width="1.1"/><circle cx="4.5" cy="9" r="1.1" fill="#b4b4b8"/><circle cx="6.5" cy="5" r="1.1" fill="#b4b4b8"/><circle cx="10.5" cy="4.5" r="1.1" fill="#b4b4b8"/><circle cx="13" cy="7.5" r="1.1" fill="#b4b4b8"/></svg>
<div style="left:520px;top:718.80px;font-size:15px;line-height:20px;color:#3d3d3d;font-weight:400;">颜色选择</div>
<div style="left:364px;top:759.3px;width:109px;height:43.3px;background:#f6f7fc;border-radius:5px"></div>
<svg style="left:372px;top:772.3px;" width="18" height="18" viewBox="0 0 18 18"><path d="M0.6,10 L0.6,17 L16.4,17 L16.4,10 M8.5,13 L8.5,1.5 M3.5,6.5 L8.5,1.5 L13.5,6.5" stroke="#b4b4b8" stroke-width="1.2" fill="none"/></svg>
<div style="left:398px;top:772.30px;font-size:15px;line-height:20px;color:#3d3d3d;font-weight:400;">附件上传</div>
<div style="left:486px;top:759.3px;width:108px;height:43.3px;background:#f6f7fc;border-radius:5px"></div>
<svg style="left:494px;top:772.3px;" width="18" height="18" viewBox="0 0 18 18"><rect x="0.6" y="1.6" width="15.8" height="14.8" rx="2" fill="none" stroke="#b4b4b8" stroke-width="1.1"/><path d="M0.6,12 L5,8 L10,12.5 L12.5,10.5 L16.4,13.5" stroke="#b4b4b8" stroke-width="1.1" fill="none"/><circle cx="11.5" cy="5.5" r="1.3" fill="none" stroke="#b4b4b8" stroke-width="1"/></svg>
<div style="left:520px;top:772.30px;font-size:15px;line-height:20px;color:#3d3d3d;font-weight:400;">图片</div>
<div style="left:348px;top:795px;width:263px;height:6px;background:#fff"></div>
<div style="left:348px;top:800.5px;width:263px;height:40.5px;background:#f4f4f4"></div>
<div style="left:348px;top:800.5px;width:263px;height:1px;background:#ebebeb"></div>
<div style="left:348px;top:840px;width:263px;height:1px;background:#e8eaf2"></div>
<div style="left:373px;top:811.00px;font-size:16px;line-height:22px;color:#303133;font-weight:500;">大纲</div>
<svg style="left:419px;top:813px;" width="14" height="14" viewBox="0 0 14 14"><circle cx="7" cy="7" r="7" fill="#222"/><text x="5" y="11.5" font-size="10" font-style="italic" font-weight="700" fill="#fff" font-family="Liberation Serif">i</text></svg>
<svg style="left:589px;top:814px;" width="8" height="13" viewBox="0 0 8 13"><polyline points="0.7,0.7 6.5,6.5 0.7,12.3" fill="none" stroke="#555" stroke-width="1.2"/></svg>
<div style="left:612px;top:125px;width:854px;height:40px;background:#f4f4f4"></div>
<div style="left:1466px;top:124px;width:1px;height:717px;background:#e4e4e4"></div>
<svg style="left:1396px;top:138px;" width="16" height="16" viewBox="0 0 16 16"><g fill="none" stroke="#303133" stroke-width="1.3" stroke-linecap="round"><path d="M2.3,0.4 L2.3,14.6 M5.3,1.3 L14.8,1.3 M5.3,6.6 L10.8,6.6 M5.3,12.5 L13.8,12.5"/><circle cx="2.3" cy="4.4" r="1.7" fill="#f4f4f4"/><circle cx="2.3" cy="10.6" r="1.7" fill="#f4f4f4"/></g></svg>
<svg style="left:1420.5px;top:138px;" width="16" height="16" viewBox="0 0 16 16"><g fill="none" stroke="#303133" stroke-width="1.3" stroke-linecap="round"><path d="M4.5,0.3 L0.6,3.5 L4.5,7.2"/><path d="M0.6,3.5 L9,3.5 A5.5,5.5 0 0 1 9,14.5 L2.1,14.5"/></g></svg>
<svg style="left:1445px;top:138px;" width="16" height="16" viewBox="0 0 16 16"><g fill="none" stroke="#303133" stroke-width="1.3" stroke-linecap="round"><path d="M10.9,0.3 L14.8,3.5 L10.9,7.2"/><path d="M14.8,3.5 L6.5,3.5 A5.5,5.5 0 0 0 6.5,14.5 L13.4,14.5"/></g></svg>
<div style="right:1177.5px;top:184.00px;font-size:17.5px;line-height:24px;color:#606266;font-weight:400;">工程名称</div>
<div style="left:758px;top:177px;width:687px;height:35px;border:1px solid #dcdfe6;border-radius:4px;background:#fff"></div>
<div style="left:777.5px;top:185.00px;font-size:15px;line-height:20px;color:#c0c4cc;font-weight:400;">请输入</div>
<div style="right:1177.5px;top:249.50px;font-size:17.5px;line-height:24px;color:#606266;font-weight:400;">项目申报金额</div>
<div style="left:758px;top:243px;width:687px;height:35px;border:1px solid #dcdfe6;border-radius:4px;background:#fff"></div>
<div style="left:627px;top:303px;width:159px;height:34px;background:#409eff;border-radius:4px"></div>
<div style="left:406.5px;width:600px;text-align:center;top:310.50px;font-size:15px;line-height:20px;color:#fff;font-weight:400;">新增子表格行数据</div>
<div style="left:627px;top:381px;width:824px;height:240px;border:1.3px solid #409eff;background:#f5f7fd"></div>
<div style="left:633px;top:386px;width:812px;height:229px;border:1px solid #e6e6e6;border-top:none;background:#fff"></div>
<div style="left:634px;top:440px;width:810px;height:115px;background:#f7f7f7;border-top:1px solid #e8e8e8;border-bottom:2px solid #e6e6e6"></div>
<div style="left:706px;top:441px;width:1px;height:113px;background:#e6e6e6"></div>
<div style="left:806px;top:441px;width:1px;height:113px;background:#e6e6e6"></div>
<div style="left:898px;top:441px;width:1px;height:113px;background:#e6e6e6"></div>
<div style="left:993px;top:441px;width:1px;height:113px;background:#e6e6e6"></div>
<div style="left:1087px;top:441px;width:1px;height:113px;background:#e6e6e6"></div>
<div style="left:1179px;top:441px;width:1px;height:113px;background:#e6e6e6"></div>
<div style="left:645px;top:488px;width:20px;height:20px;border:1.6px solid #dadfe8;border-radius:3px;background:#f2f2f2"></div>
<svg style="left:720px;top:492px;" width="11" height="12" viewBox="0 0 11 12"><g stroke="#505050" stroke-width="2"><path d="M3.6,0 L2.1,12 M8,0 L6.5,12"/><path d="M0.6,3.8 L10.4,3.8 M0,8.3 L9.8,8.3"/></g></svg>
<svg style="left:819.1px;top:478px;" width="21" height="17" viewBox="0 0 21 17"><rect x="1" y="1" width="14.6" height="14.6" rx="3" fill="none" stroke="#555" stroke-width="1.4"/><path d="M8.5,10.2 L17.8,1" stroke="#f7f7f7" stroke-width="4.2"/><polygon points="7.2,11.4 16.6,0.4 18.7,2.5" fill="#555"/></svg>
<div style="left:841.5px;top:472.70px;font-size:17.5px;line-height:24px;color:#505050;font-weight:700;">项目</div>
<div style="left:820px;top:499.40px;font-size:17.5px;line-height:24px;color:#505050;font-weight:700;">名称</div>
<svg style="left:863px;top:503.9px;" width="14" height="19" viewBox="0 0 14 19"><polygon points="7,0 14,7 0,7" fill="#c0c4cc"/><polygon points="0,12 14,12 7,19" fill="#c0c4cc"/></svg>
<svg style="left:912px;top:478px;" width="21" height="17" viewBox="0 0 21 17"><rect x="1" y="1" width="14.6" height="14.6" rx="3" fill="none" stroke="#555" stroke-width="1.4"/><path d="M8.5,10.2 L17.8,1" stroke="#f7f7f7" stroke-width="4.2"/><polygon points="7.2,11.4 16.6,0.4 18.7,2.5" fill="#555"/></svg>
<div style="left:934px;top:472.70px;font-size:17.5px;line-height:24px;color:#505050;font-weight:700;">项目</div>
<div style="left:913px;top:499.40px;font-size:17.5px;line-height:24px;color:#505050;font-weight:700;">金额</div>
<svg style="left:955px;top:503.9px;" width="14" height="19" viewBox="0 0 14 19"><polygon points="7,0 14,7 0,7" fill="#c0c4cc"/><polygon points="0,12 14,12 7,19" fill="#c0c4cc"/></svg>
<svg style="left:1006.1px;top:464.3px;" width="21" height="17" viewBox="0 0 21 17"><rect x="1" y="1" width="14.6" height="14.6" rx="3" fill="none" stroke="#555" stroke-width="1.4"/><path d="M8.5,10.2 L17.8,1" stroke="#f7f7f7" stroke-width="4.2"/><polygon points="7.2,11.4 16.6,0.4 18.7,2.5" fill="#555"/></svg>
<div style="left:1028px;top:458.20px;font-size:17.5px;line-height:24px;color:#505050;font-weight:700;">项目</div>
<div style="left:1006.5px;top:485.40px;font-size:17.5px;line-height:24px;color:#505050;font-weight:700;">负责人</div>
<svg style="left:1014px;top:517.9px;" width="14" height="19" viewBox="0 0 14 19"><polygon points="7,0 14,7 0,7" fill="#c0c4cc"/><polygon points="0,12 14,12 7,19" fill="#c0c4cc"/></svg>
<div style="left:1100px;top:473.00px;font-size:17.5px;line-height:24px;color:#505050;font-weight:700;">工程信</div>
<div style="left:1100px;top:499.50px;font-size:17.5px;line-height:24px;color:#505050;font-weight:700;">息</div>
<svg style="left:1125px;top:504.2px;" width="14" height="19" viewBox="0 0 14 19"><polygon points="7,0 14,7 0,7" fill="#c0c4cc"/><polygon points="0,12 14,12 7,19" fill="#c0c4cc"/></svg>
<div style="left:1193.5px;top:486.00px;font-size:17.5px;line-height:24px;color:#505050;font-weight:700;">操作</div>
<div style="left:739px;width:600px;text-align:center;top:574.30px;font-size:17.5px;line-height:24px;color:#606266;font-weight:400;">暂无数据</div>
<div style="left:1297px;top:369px;width:27px;height:27px;border:1px solid #409eff;border-radius:6px;background:#fff"></div>
<svg style="left:1297px;top:369px;" width="26" height="26" viewBox="0 0 26 26"><g fill="none" stroke="#409eff" stroke-width="1.2"><path d="M9,11.5 A5.3,5.3 0 0 1 19,11.8"/><path d="M19,15.5 A5.3,5.3 0 0 1 9,15.2"/></g><polygon points="8.2,8.6 10.8,11.2 7.6,12.6" fill="#409eff"/><polygon points="19.8,18.4 17.2,15.8 20.4,14.4" fill="#409eff"/></svg>
<div style="left:1328px;top:369px;width:27px;height:27px;border:1px solid #409eff;border-radius:6px;background:#fff"></div>
<svg style="left:1328px;top:369px;" width="26" height="26" viewBox="0 0 26 26"><g fill="none" stroke="#409eff" stroke-width="1.2"><path d="M10.2,19 Q7.6,19 7.6,16.6 Q7.6,15.6 8.6,14.6 L15,8.2 Q16,7.2 17,7.2 Q19.4,7.2 19.4,9.6 Q19.4,10.6 18.4,11.6 L12,18 Q11.2,19 10.2,19 Z"/><path d="M11.4,15.4 L15.6,11.2"/></g></svg>
<div style="left:1359px;top:369px;width:27px;height:27px;border:1px solid #409eff;border-radius:6px;background:#fff"></div>
<svg style="left:1359px;top:369px;" width="26" height="26" viewBox="0 0 26 26"><g fill="#409eff"><circle cx="13.5" cy="13" r="4.6"/><g stroke="#409eff" stroke-width="2.6"><line x1="13.5" y1="6.8" x2="13.5" y2="19.2"/><line x1="8.1" y1="9.9" x2="18.9" y2="16.1"/><line x1="8.1" y1="16.1" x2="18.9" y2="9.9"/></g></g><circle cx="13.5" cy="13" r="2.1" fill="#fff"/></svg>
<div style="left:1390px;top:369px;width:27px;height:27px;border:1px solid #409eff;border-radius:6px;background:#fff"></div>
<svg style="left:1390px;top:369px;" width="26" height="26" viewBox="0 0 26 26"><g fill="none" stroke="#409eff" stroke-width="1.2"><rect x="10" y="7.2" width="9.5" height="9.4" rx="1.5"/><path d="M7,10.2 L7,18.4 Q7,19.6 8.2,19.6 L16.4,19.6"/></g></svg>
<div style="left:1420px;top:369px;width:27px;height:27px;border:1px solid #f56c6c;border-radius:6px;background:#fff"></div>
<svg style="left:1420px;top:369px;" width="26" height="26" viewBox="0 0 26 26"><g fill="none" stroke="#f56c6c" stroke-width="1.2"><path d="M7.5,8.9 L19.5,8.9 M11.8,8.9 L11.8,7.2 L15.7,7.2 L15.7,8.9"/><path d="M8.8,8.9 L8.8,19.4 L18.7,19.4 L18.7,8.9"/><path d="M12.5,12.6 L12.5,17 M15.2,12.6 L15.2,17"/></g></svg>
<svg style="left:1355.5px;top:811px;" width="15" height="11" viewBox="0 0 15 11"><g fill="none" stroke="#409eff" stroke-width="1.2"><path d="M0.8,5.5 Q7.5,-1.5 14.2,5.5 Q7.5,12.5 0.8,5.5 Z"/><circle cx="7.5" cy="5.5" r="2.2"/></g></svg>
<div style="left:1381px;top:807.00px;font-size:15px;line-height:20px;color:#409eff;font-weight:400;">查看Api</div>
<div style="left:1467px;top:124px;width:424px;height:40.5px;background:#f4f4f4;border-bottom:1px solid #e8eaf0"></div>
<div style="left:1492px;top:134.70px;font-size:16px;line-height:22px;color:#303133;font-weight:400;">基础</div>
<div style="left:1467px;top:164.5px;width:424px;height:38px;background:#f4f4f4;border-bottom:1px solid #e8eaf0"></div>
<div style="left:1492px;top:173.50px;font-size:16px;line-height:22px;color:#303133;font-weight:400;">验证</div>
<div style="left:1467px;top:202.5px;width:424px;height:39.5px;background:#f4f4f4;"></div>
<div style="left:1492px;top:211.10px;font-size:16px;line-height:22px;color:#303133;font-weight:400;">高级</div>
<svg style="left:1871px;top:138px;" width="7" height="13" viewBox="0 0 7 13"><polyline points="0.7,0.7 6.3,6.5 0.7,12.3" fill="none" stroke="#606266" stroke-width="1.1"/></svg>
<svg style="left:1871px;top:177px;" width="7" height="13" viewBox="0 0 7 13"><polyline points="0.7,0.7 6.3,6.5 0.7,12.3" fill="none" stroke="#606266" stroke-width="1.1"/></svg>
<svg style="left:1868px;top:218px;" width="13" height="7" viewBox="0 0 13 7"><polyline points="0.7,0.7 6.5,6.3 12.3,0.7" fill="none" stroke="#606266" stroke-width="1.1"/></svg>
<div style="left:1480px;top:254px;width:150px;height:35px;background:#409eff;border-radius:4px"></div>
<svg style="left:1501px;top:265px;" width="12" height="12" viewBox="0 0 12 12"><path d="M6,0 L6,12 M0,6 L12,6" stroke="#fff" stroke-width="1.3"/></svg>
<div style="left:1524px;top:262.00px;font-size:15px;line-height:20px;color:#fff;font-weight:400;">添加事件</div>
<svg style="left:1597px;top:268px;" width="12" height="7" viewBox="0 0 12 7"><polyline points="0.7,0.7 6,5.8 11.3,0.7" fill="none" stroke="#fff" stroke-width="1.3"/></svg>
<div style="left:1480px;top:320.50px;font-size:17.5px;line-height:24px;color:#505050;font-weight:700;">显示端</div>
<div style="left:1480px;top:349px;width:194px;height:39px;background:#409eff;border-radius:4px"></div>
<div style="left:1570px;top:349px;width:1px;height:39px;background:#8cc5ff"></div>
<svg style="left:1500px;top:361px;" width="14" height="14" viewBox="0 0 14 14"><g fill="none" stroke="#fff" stroke-width="1.4"><rect x="0.7" y="0.7" width="12.6" height="9"/><path d="M7,9.7 L7,12.8 M3.5,13 L10.5,13"/></g></svg>
<div style="left:1518px;top:359.00px;font-size:15px;line-height:20px;color:#fff;font-weight:700;">PC端</div>
<svg style="left:1592.5px;top:361px;" width="10" height="15" viewBox="0 0 10 15"><g fill="none" stroke="#fff" stroke-width="1.3"><rect x="0.7" y="0.7" width="8.6" height="13.6" rx="1.5"/><line x1="3.5" y1="11.5" x2="6.5" y2="11.5"/></g></svg>
<div style="left:1609px;top:359.00px;font-size:15px;line-height:20px;color:#fff;font-weight:700;">移动端</div>
<div style="left:1480px;top:435.00px;font-size:17.5px;line-height:24px;color:#505050;font-weight:700;">标签宽度</div>
<div style="left:1480px;top:463px;width:400px;height:40px;border:1px solid #dcdfe6;border-radius:4px;background:#fff"></div>
<div style="left:1499.5px;top:472.50px;font-size:16.25px;line-height:22px;color:#c0c4cc;font-weight:400;">请输入标签宽度</div>
<div style="left:1480px;top:536.00px;font-size:16px;line-height:22px;color:#222;font-weight:500;">扩展属性</div>
<svg style="left:1550px;top:539.5px;" width="14" height="14" viewBox="0 0 14 14"><circle cx="7" cy="7" r="7" fill="#222"/><text x="5" y="11.5" font-size="10" font-style="italic" font-weight="700" fill="#fff" font-family="Liberation Serif">i</text></svg>
<svg style="left:1799px;top:570.5px;" width="12" height="12" viewBox="0 0 12 12"><path d="M6,0 L6,12 M0,6 L12,6" stroke="#409eff" stroke-width="1.2"/></svg>
<div style="left:1819px;top:567.00px;font-size:15px;line-height:20px;color:#409eff;font-weight:400;">属性定义</div>
<div style="left:1480px;top:594px;width:400px;height:121px;border:1px solid #ebeef5;background:#fff"></div>
<div style="left:1481px;top:639px;width:398px;height:1px;background:#ebeef5"></div>
<div style="left:1680px;top:595px;width:1px;height:44px;background:#ebeef5"></div>
<div style="left:1493px;top:607.30px;font-size:15px;line-height:20px;color:#909399;font-weight:700;">属性名</div>
<div style="left:1693px;top:607.30px;font-size:15px;line-height:20px;color:#909399;font-weight:700;">属性值</div>
<div style="left:1380px;width:600px;text-align:center;top:668.00px;font-size:15px;line-height:20px;color:#909399;font-weight:400;">暂无数据</div>
<div style="left:1467px;top:804px;width:426px;height:37px;background:#f4f4f4;border-top:1px solid #e8eaf0"></div>
<div style="left:1492px;top:814.00px;font-size:16px;line-height:22px;color:#303133;font-weight:400;">样式</div>
<svg style="left:1871px;top:818px;" width="7" height="13" viewBox="0 0 7 13"><polyline points="0.7,0.7 6.3,6.5 0.7,12.3" fill="none" stroke="#606266" stroke-width="1.1"/></svg>
</body></html>
